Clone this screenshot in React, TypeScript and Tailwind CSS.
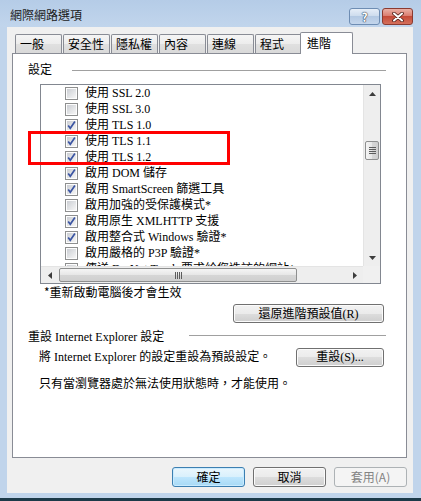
import React from "react";

const sans = "[font-family:'Noto_Sans_CJK_TC','Noto_Sans',sans-serif]";
const ming = "[font-family:'Liberation_Serif','Noto_Sans_CJK_TC',serif]";

const btn =
  "h-[19px] border border-[#707070] rounded-[3px] bg-[linear-gradient(#f2f2f2_0%,#ebebeb_50%,#dddddd_50%,#cfcfcf_100%)] shadow-[inset_0_0_0_1px_#fbfbfb] flex items-center justify-center leading-[16px]";

const tabs = ["一般", "安全性", "隱私權", "內容", "連線", "程式"];

const items: [string, boolean][] = [
  ["使用 SSL 2.0", false],
  ["使用 SSL 3.0", false],
  ["使用 TLS 1.0", true],
  ["使用 TLS 1.1", true],
  ["使用 TLS 1.2", true],
  ["啟用 DOM 儲存", true],
  ["啟用 SmartScreen 篩選工具", true],
  ["啟用加強的受保護模式*", false],
  ["啟用原生 XMLHTTP 支援", true],
  ["啟用整合式 Windows 驗證*", true],
  ["啟用嚴格的 P3P 驗證*", false],
  ["傳送 Do Not Track 要求給您造訪的網站*", false],
];

function Check({ on }: { on: boolean }) {
  return (
    <svg width="13" height="13" viewBox="0 0 13 13" className="shrink-0">
      <defs>
        <linearGradient id="cbfill" x1="0" y1="0" x2="1" y2="1">
          <stop offset="0" stopColor="#cbced3" />
          <stop offset="1" stopColor="#f6f6f6" />
        </linearGradient>
      </defs>
      <rect x="0.5" y="0.5" width="12" height="12" fill="#fdfdfd" stroke="#8e8f8f" />
      <rect x="2" y="2" width="9" height="9" fill="url(#cbfill)" />
      {on && (
        <path
          d="M3.2 6.4 L5.3 9.3 L9.9 2.6"
          fill="none"
          stroke="#3b55a3"
          strokeWidth="1.7"
        />
      )}
    </svg>
  );
}

function Arrow({ dir }: { dir: "up" | "down" | "left" | "right" }) {
  const pts = {
    up: "0,4 3.5,0 7,4",
    down: "0,0 7,0 3.5,4",
    left: "4,0 4,7 0,3.5",
    right: "0,0 0,7 4,3.5",
  }[dir];
  const vert = dir === "up" || dir === "down";
  return (
    <svg width={vert ? 7 : 4} height={vert ? 4 : 7}>
      <polygon points={pts} fill="#3c3c3c" />
    </svg>
  );
}

function VScroll() {
  return (
    <div className="w-[17px] flex flex-col bg-[#eeeeee] border-l border-[#e4e4e4]">
      <div className="h-[17px] flex items-center justify-center">
        <Arrow dir="up" />
      </div>
      <div className="h-[39px]" />
      <div className="h-[19px] mx-px rounded-[2px] border border-[#8e8f8f] bg-[linear-gradient(90deg,#f5f5f5,#e6e6e6_50%,#d6d6d6_50%,#cfcfcf)] flex flex-col items-center justify-center gap-[1px]">
        {[0, 1, 2, 3].map((i) => (
          <div key={i} className="w-[7px] h-px bg-[#5c5c5c]" />
        ))}
      </div>
      <div className="flex-1" />
      <div className="h-[17px] flex items-center justify-center">
        <Arrow dir="down" />
      </div>
    </div>
  );
}

function HScroll() {
  return (
    <div className="flex-1 flex bg-[#eeeeee] border-t border-[#e4e4e4]">
      <div className="w-[17px] flex items-center justify-center">
        <Arrow dir="left" />
      </div>
      <div className="w-px" />
      <div className="w-[238px] my-px rounded-[2px] border border-[#8e8f8f] bg-[linear-gradient(#f5f5f5,#e6e6e6_50%,#d6d6d6_50%,#cfcfcf)] flex items-center justify-center gap-[1px]">
        {[0, 1, 2, 3].map((i) => (
          <div key={i} className="w-px h-[7px] bg-[#5c5c5c]" />
        ))}
      </div>
      <div className="flex-1" />
      <div className="w-[17px] flex items-center justify-center">
        <Arrow dir="right" />
      </div>
    </div>
  );
}

export default function App() {
  return (
    <div className={`${sans} relative w-[421px] h-[501px] flex flex-col overflow-hidden bg-[#c0d4eb] text-[12px] leading-[16px] text-black`}>
      {/* title bar */}
      <div className="h-[27px] flex bg-[linear-gradient(#b5cce7,#c1d5ec)]">
        <div className="pl-[10px] pt-[7px] text-[#1b1b1b]">網際網路選項</div>
        <div className="ml-auto mr-[8px] mt-[8px] flex gap-[2px]">
          <div className="w-[31px] h-[17px] rounded-[3px] border border-[#6e8db3] bg-[linear-gradient(#e6eef8,#cbdaec_50%,#b4c9e3_50%,#c4d6ec)] flex items-center justify-center">
            <span className="text-white font-bold text-[12px] leading-none [text-shadow:0_0_1px_#2f3d52,0_0_1px_#2f3d52,0_0_1px_#2f3d52]">
              ?
            </span>
          </div>
          <div className="w-[31px] h-[17px] rounded-[3px] border border-[#8b3a30] bg-[linear-gradient(#eab0a5,#d9776a_50%,#c54a38_50%,#d4705c)] flex items-center justify-center">
            <svg width="12" height="10" viewBox="0 0 12 10">
              <path d="M2 1.5 L10 8.5 M10 1.5 L2 8.5" stroke="#4a1c16" strokeWidth="3.6" strokeLinecap="round" />
              <path d="M2 1.5 L10 8.5 M10 1.5 L2 8.5" stroke="#ffffff" strokeWidth="2" strokeLinecap="round" />
            </svg>
          </div>
        </div>
      </div>

      <div className="flex h-[466px]">
        <div className="w-[7px]" />
        {/* client area */}
        <div className="w-[406px] bg-[#f0f0f0] flex flex-col">
          {/* tabs */}
          <div className="mt-[5px] h-[21px] pl-[8px] flex items-end">
            {tabs.map((t, i) => (
              <div
                key={t}
                className={`w-[47px] h-[19px] pl-[4px] flex items-center border border-b-0 border-[#898c95] rounded-t-[2px] bg-[linear-gradient(#f5f5f5,#ececec_50%,#e0e0e0_50%,#d9d9d9)] ${i < 5 ? "mr-px" : ""}`}
              >
                {t}
              </div>
            ))}
            <div className="relative z-10 -ml-[2px] -mb-px w-[53px] h-[22px] pl-[6px] pb-[1px] flex items-center border border-b-0 border-[#898c95] rounded-t-[2px] bg-white">
              進階
            </div>
          </div>

          {/* tab page */}
          <div className="ml-[5px] w-[395px] h-[405px] border border-[#898c95] bg-white flex flex-col">
            <div className="mt-[7px] h-[16px] flex items-start">
              <div className="pl-[15px]">設定</div>
              <div className="ml-auto mr-[20px] mt-[9px] w-[314px] h-px bg-[#a0a0a0]" />
            </div>

            <div className="mt-[7px] ml-[27px] w-[341px] h-[200px] border border-[#828790] flex flex-col">
              <div className="flex h-[181px]">
                <div className={`${ming} flex-1 overflow-hidden`}>
                  {items.map(([label, on]) => (
                    <div key={label} className="h-[16px] flex items-center pl-[24px] gap-[7px] whitespace-nowrap">
                      <Check on={on} />
                      <span>{label}</span>
                    </div>
                  ))}
                </div>
                <VScroll />
              </div>
              <div className="flex h-[17px]">
                <HScroll />
                <div className="w-[17px] bg-[#f0f0f0]" />
              </div>
            </div>

            <div className="pl-[31px] h-[16px]">*重新啟動電腦後才會生效</div>
            <div className="mt-[4px] flex justify-end pr-[22px]">
              <div className={`${btn} ${ming} w-[151px]`}>還原進階預設值(R)</div>
            </div>

            <div className="mt-[6px] h-[16px] flex items-start">
              <div className={`${ming} pl-[15px]`}>重設 Internet Explorer 設定</div>
              <div className="ml-auto mr-[20px] mt-[6px] w-[197px] h-px bg-[#a0a0a0]" />
            </div>
            <div className="mt-[3px] h-[18px] flex items-center">
              <div className={`${ming} pl-[26px]`}>將 Internet Explorer 的設定重設為預設設定。</div>
              <div className={`${btn} ${ming} ml-auto mr-[22px] w-[88px] h-[18px]`}>重設(S)...</div>
            </div>
            <div className={`${ming} mt-[10px] pl-[26px] h-[16px]`}>只有當瀏覽器處於無法使用狀態時，才能使用。</div>
          </div>

          {/* dialog buttons */}
          <div className="mt-[9px] pr-[6px] flex justify-end gap-[8px]">
            <div className="w-[73px] h-[20px] rounded-[3px] border border-[#3c7fb1] bg-[linear-gradient(#eaf6fd,#d9f0fc_50%,#bee6fd_50%,#a7d9f5)] shadow-[inset_0_0_0_1px_#c9ebff] flex items-center justify-center">
              確定
            </div>
            <div className={`${btn} w-[73px] h-[20px]`}>取消</div>
            <div className="w-[73px] h-[20px] rounded-[3px] border border-[#adb2b5] bg-[#f4f4f4] text-[#838383] flex items-center justify-center">
              套用(A)
            </div>
          </div>
        </div>
      </div>

      <div className="h-[5px]" />
      <div className="h-[3px] bg-[#1c3a49]" />

      {/* annotation */}
      <div className="absolute left-[28px] top-[131px] w-[202px] h-[34px] border-[3px] border-[#ff0000]" />
    </div>
  );
}
